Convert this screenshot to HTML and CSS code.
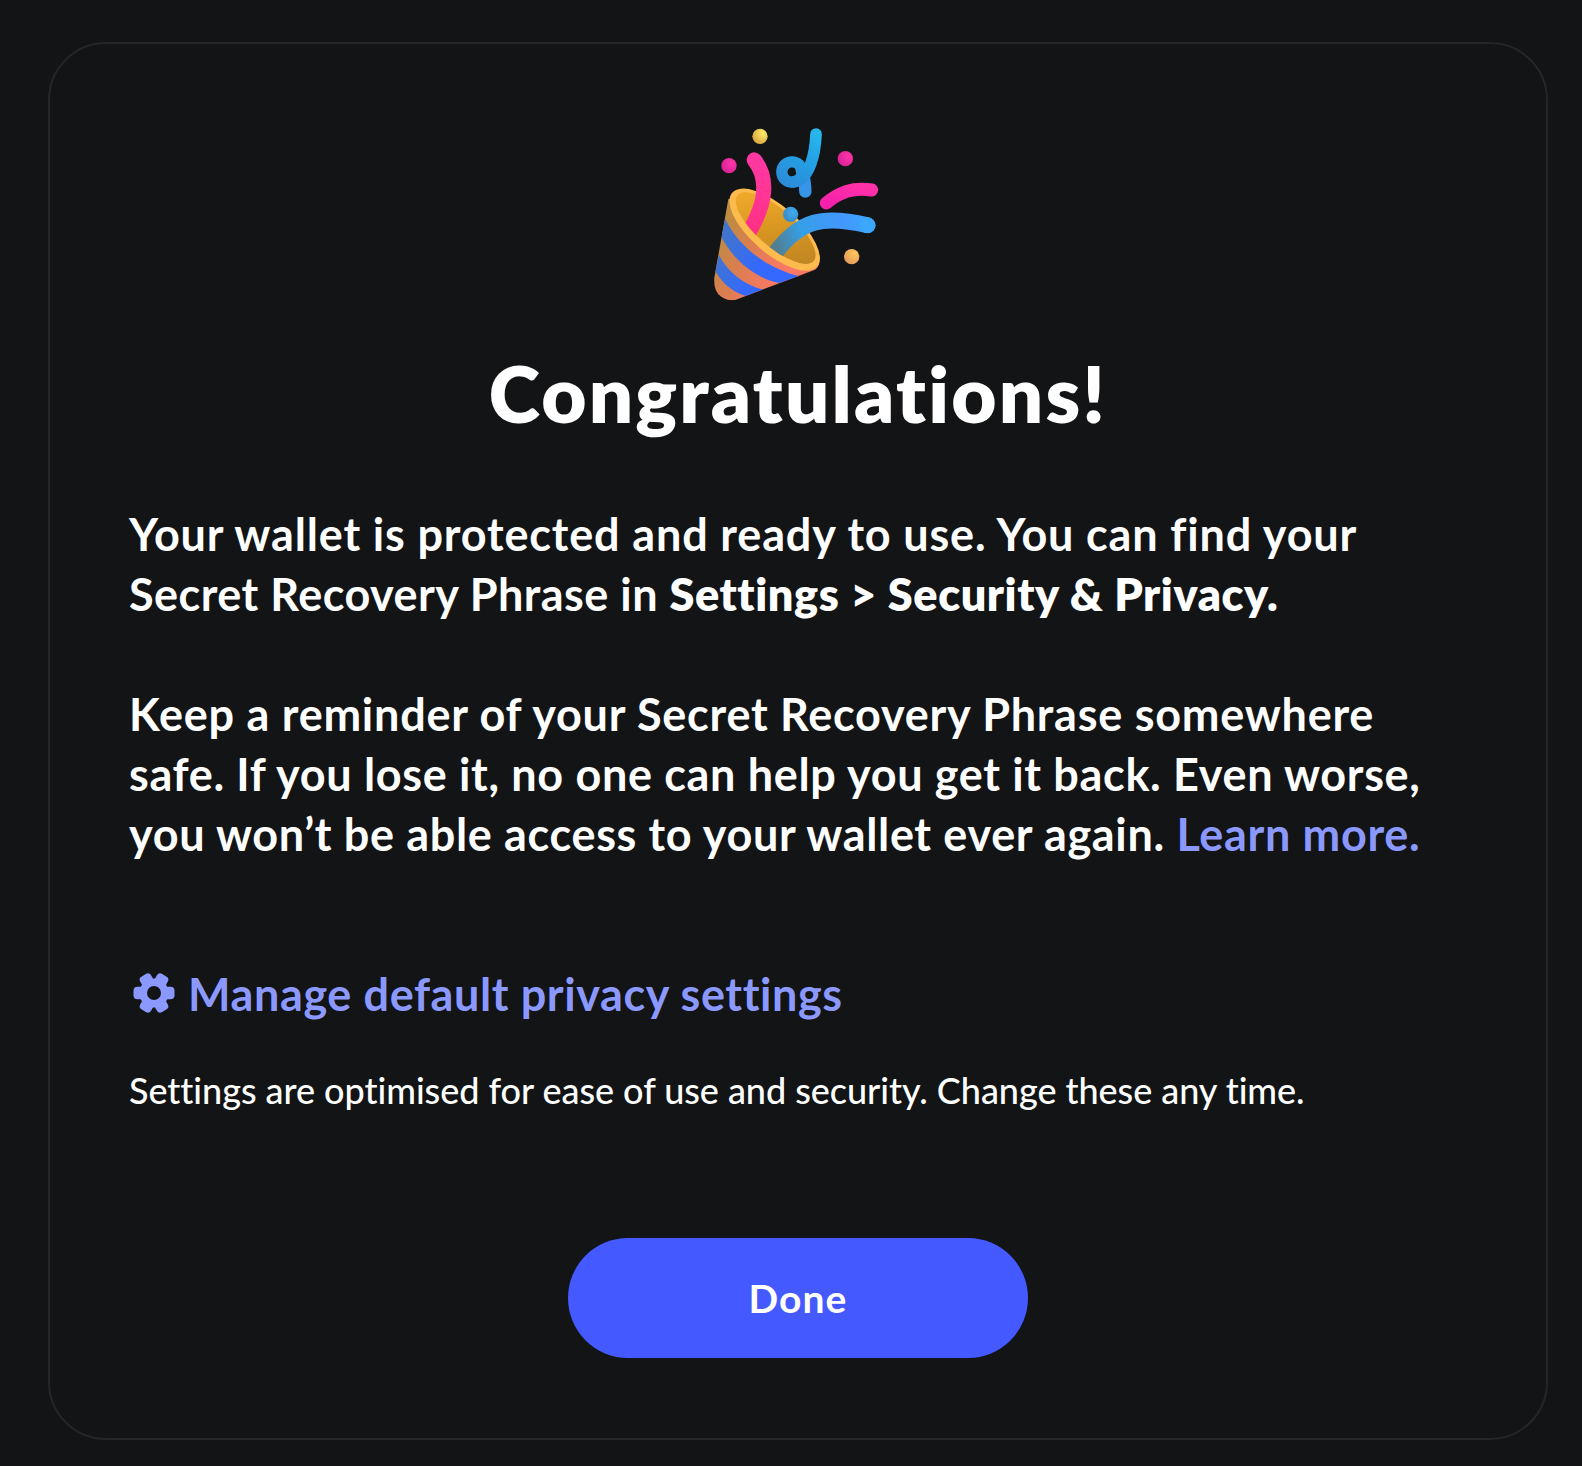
FILE: index.html
```html
<!DOCTYPE html>
<html lang="en">
<head>
<meta charset="utf-8">
<title>Congratulations!</title>
<link rel="stylesheet" href="styles.css">
</head>
<body>
<main class="card">
  <svg class="popper" viewBox="0 0 570 585" aria-hidden="true">
    <defs>
      <linearGradient id="cone" gradientUnits="userSpaceOnUse" x1="60" y1="350" x2="250" y2="460"><stop offset="0" stop-color="#bd8b42"/><stop offset=".5" stop-color="#dd7d52"/><stop offset="1" stop-color="#fb7964"/></linearGradient>
      <linearGradient id="band" gradientUnits="userSpaceOnUse" x1="60" y1="400" x2="180" y2="460"><stop offset="0" stop-color="#4074cf"/><stop offset="1" stop-color="#3468ff"/></linearGradient>
      <linearGradient id="inside" gradientUnits="userSpaceOnUse" x1="110" y1="250" x2="330" y2="430"><stop offset="0" stop-color="#f5ad2c"/><stop offset=".5" stop-color="#d99722"/><stop offset="1" stop-color="#bd8323"/></linearGradient>
      <linearGradient id="pink" x1="0" y1="0" x2="0" y2="1"><stop offset="0" stop-color="#ff38a2"/><stop offset="1" stop-color="#ff2f83"/></linearGradient>
      <linearGradient id="magenta" x1="0" y1="1" x2="1" y2="0"><stop offset="0" stop-color="#f520ac"/><stop offset="1" stop-color="#ff31a8"/></linearGradient>
      <linearGradient id="blue" gradientUnits="userSpaceOnUse" x1="230" y1="400" x2="520" y2="320"><stop offset="0" stop-color="#527f91"/><stop offset=".28" stop-color="#359fe7"/><stop offset=".7" stop-color="#4397fb"/><stop offset="1" stop-color="#3ba8ff"/></linearGradient>
      <linearGradient id="curl" gradientUnits="userSpaceOnUse" x1="350" y1="45" x2="260" y2="215"><stop offset="0" stop-color="#28b8ed"/><stop offset=".5" stop-color="#249fe4"/><stop offset="1" stop-color="#2d8bd9"/></linearGradient>
      <radialGradient id="dotPink" cx=".7" cy=".35" r=".75"><stop offset="0" stop-color="#ff35a9"/><stop offset="1" stop-color="#d52196"/></radialGradient>
      <radialGradient id="dotYellow" cx=".7" cy=".3" r=".8"><stop offset="0" stop-color="#ffec68"/><stop offset="1" stop-color="#d7a33e"/></radialGradient>
      <radialGradient id="dotOrange" cx=".7" cy=".3" r=".8"><stop offset="0" stop-color="#ffc65c"/><stop offset="1" stop-color="#e19b59"/></radialGradient>
      <radialGradient id="dotBlue" cx=".65" cy=".35" r=".75"><stop offset="0" stop-color="#41acef"/><stop offset="1" stop-color="#3487c7"/></radialGradient>
      <clipPath id="coneShape"><path d="M85 252L43 488Q40 528 62 544Q84 560 108 554L345 464Q362 452 358 425L130 250Z"/></clipPath>
      <clipPath id="mouth">
        <ellipse cx="227" cy="339" rx="151" ry="56" transform="rotate(41 227 339)"/>
        <path d="M0 0H570V585L345 440L113 240L0 240Z"/>
      </clipPath>
    </defs>
    <g clip-path="url(#coneShape)">
      <path fill="url(#cone)" d="M0 200H400V585H0Z"/>
      <path fill="url(#band)" d="M76 312C110 385 190 458 300 484L238 504C165 490 98 432 64 366ZM57 420C82 470 130 510 190 524L138 543C95 530 65 504 46 468Z"/>
    </g>
    <ellipse cx="224" cy="344" rx="169" ry="71" transform="rotate(41 224 344)" fill="#fcbb4c"/>
    <ellipse cx="227" cy="339" rx="151" ry="56" transform="rotate(41 227 339)" fill="url(#inside)"/>
    <g clip-path="url(#mouth)" fill="none">
      <path d="M163 135C201 183 207 258 139 364" stroke="url(#pink)" stroke-width="46" stroke-linecap="round"/>
      <path d="M221 420C300 312 370 300 503 331" stroke="url(#blue)" stroke-width="48"/>
      <circle cx="503" cy="331" r="24" fill="#3ba7ff"/>
    </g>
    <path d="M379 264C418 232 458 216 515 225" fill="none" stroke="url(#magenta)" stroke-width="39" stroke-linecap="round"/>
    <path d="M305 165Q316 195 316 230" fill="none" stroke="#3795e8" stroke-width="37" stroke-linecap="round"/>
    <circle cx="276" cy="171" r="30.500" fill="none" stroke="url(#curl)" stroke-width="34"/>
    <path d="M348 57C346 112 330 196 279 201" fill="none" stroke="url(#curl)" stroke-width="35" stroke-linecap="round"/>
    <circle cx="180" cy="64" r="23" fill="url(#dotYellow)"/>
    <circle cx="87" cy="152" r="23" fill="url(#dotPink)"/>
    <circle cx="436" cy="131" r="23" fill="url(#dotPink)"/>
    <circle cx="272" cy="298" r="23" fill="url(#dotBlue)"/>
    <circle cx="455" cy="425" r="23" fill="url(#dotOrange)"/>
  </svg>
  <h1 class="title">Congratulations!</h1>
  <p class="text">
    <span class="line line-wide">Your wallet is protected and ready to use. You can find your</span>
    <span class="line line-tight">Secret Recovery Phrase in <strong class="path">Settings &gt; Security &amp; Privacy.</strong></span>
  </p>
  <p class="text">
    <span class="line line-medium">Keep a reminder of your Secret Recovery Phrase somewhere</span>
    <span class="line">safe. If you lose it, no one can help you get it back. Even worse,</span>
    <span class="line">you won’t be able access to your wallet ever again. <a class="link">Learn more.</a></span>
  </p>
  <a class="manage">
    <svg class="gear" viewBox="-21 -21 42 42" aria-hidden="true">
      <mask id="hole"><rect x="-21" y="-21" width="42" height="42" fill="#fff"/><circle r="7" fill="#000"/></mask>
      <g mask="url(#hole)" fill="#8b99ff">
        <circle r="14.6"/>
        <rect x="-20.5" y="-6.300" width="41" height="12.600" rx="4"/>
        <rect x="-20.5" y="-6.300" width="41" height="12.600" rx="4" transform="rotate(60)"/>
        <rect x="-20.5" y="-6.300" width="41" height="12.600" rx="4" transform="rotate(120)"/>
      </g>
    </svg>
    <span>Manage default privacy settings</span>
  </a>
  <p class="note">Settings are optimised for ease of use and security. Change these any time.</p>
  <button class="done">Done</button>
</main>
</body>
</html>
```
FILE: styles.css
```css
* { box-sizing: border-box; }
body {
  margin: 0;
  padding: 42px 34px 26px 48px;
  background: #121415;
  color: #fff;
  font-family: Lato, "Open Sans", sans-serif;
}
.card {
  display: flex;
  flex-direction: column;
  align-items: flex-start;
  width: 1500px;
  height: 1398px;
  padding: 71px 79px 0;
  border: 2px solid #242628;
  border-radius: 58px;
}
.popper {
  width: 190px;
  height: 195px;
  margin-left: 571px;
}
.title {
  align-self: center;
  margin: 35px 0 63px;
  font-size: 78px;
  font-weight: 800;
  line-height: 96px;
  letter-spacing: 2.2px;
}
.text {
  margin: 0 0 60px;
  font-size: 45px;
  font-weight: 700;
  line-height: 60px;
  letter-spacing: 0.66px;
}
.line { display: block; white-space: nowrap; }
.line-wide { letter-spacing: 0.84px; }
.line-medium { letter-spacing: 0.75px; }
.line-tight { letter-spacing: 0.47px; }
.path { font-weight: 800; letter-spacing: 0.57px; }
.link { color: #8b99ff; }
.manage {
  display: flex;
  align-items: center;
  gap: 13px;
  height: 60px;
  margin: 40px 0 42px 4px;
  color: #8b99ff;
  font-size: 45px;
  font-weight: 700;
  line-height: 60px;
  letter-spacing: 0.6px;
  white-space: nowrap;
}
.gear { width: 42px; height: 42px; margin-top: -2px; }
.note {
  margin: 0 0 124px;
  font-size: 36px;
  font-weight: 500;
  line-height: 48px;
  font-variant-ligatures: none;
  letter-spacing: -0.04px;
  white-space: nowrap;
}
.done {
  align-self: center;
  width: 460px;
  height: 120px;
  padding: 0;
  border: 0;
  border-radius: 60px;
  background: #4459ff;
  color: #fff;
  font: 700 39px/120px Lato, "Open Sans", sans-serif;
  letter-spacing: 1.1px;
}
```
